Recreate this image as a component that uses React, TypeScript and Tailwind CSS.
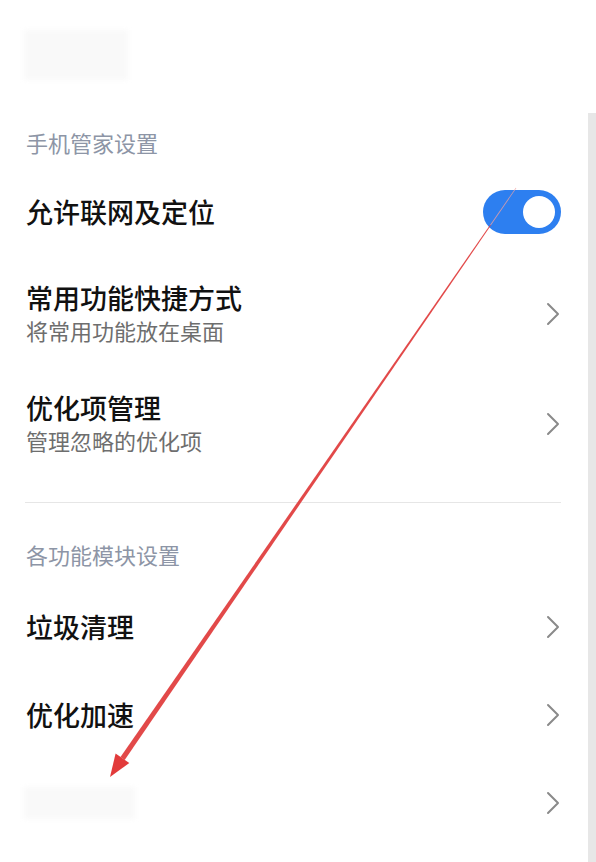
const FONT = { fontFamily: '"Noto Sans CJK SC", "Noto Sans", sans-serif' };

function Chevron() {
  return (
    <svg width="14" height="24" viewBox="0 0 14 24" className="shrink-0">
      <path d="M2 2 L12 12 L2 22" fill="none" stroke="#8a8a8a" strokeWidth="2" strokeLinecap="round" strokeLinejoin="round" />
    </svg>
  );
}

function SectionHeader({ text, h }: { text: string; h: string }) {
  return (
    <div className={`flex items-center ${h} text-[22px] leading-none text-[#8d95a6]`}>{text}</div>
  );
}

function NavRow({ title, sub, h }: { title: React.ReactNode; sub?: string; h: string }) {
  return (
    <div className={`flex items-center justify-between ${h}`}>
      <div className="flex flex-col">
        <div className="text-[27px] font-medium leading-[32px] text-[#111]">{title}</div>
        {sub && <div className="text-[22px] leading-[32px] text-[#6e6e6e]">{sub}</div>}
      </div>
      <div className="mr-[1px]">
        <Chevron />
      </div>
    </div>
  );
}

function Arrow() {
  // tapered red annotation arrow drawn over the list
  return (
    <svg className="pointer-events-none absolute left-0 top-0" width="596" height="862" viewBox="0 0 596 862">
      <polygon points="516.3,188.2 515.7,187.8 490,225 490.8,225.6" fill="#f0a0a0" opacity="0.8" />
      <polygon points="490.8,225.6 490,225 120.5,757.0 124.7,759.9" fill="#e03a3a" opacity="0.92" />
      <polygon points="110,777 115.6,753.5 129.3,763.0" fill="#e23b3b" />
    </svg>
  );
}

export default function App() {
  return (
    <div className="relative h-[862px] w-full overflow-hidden bg-white" style={FONT}>
      <div className="absolute bottom-0 right-0 top-[113px] w-[8px] bg-[#e7e7e7]" />
      <div className="pl-[26px] pr-[35px]">
        <div className="h-[112px] pt-[30px]">
          <div className="ml-[-2px] h-[50px] w-[104px] bg-[#f9f9f9] blur-[2px]" />
        </div>
        <SectionHeader text="手机管家设置" h="h-[60px]" />
        <div className="flex h-[80px] items-center justify-between">
          <div className="text-[27px] font-medium leading-[32px] text-[#111]">允许联网及定位</div>
          <div className="flex h-[44px] w-[78px] items-center justify-end rounded-full bg-[#2d7ff0] pr-[6px]">
            <div className="h-[32px] w-[32px] rounded-full bg-white" />
          </div>
        </div>
        <NavRow title="常用功能快捷方式" sub="将常用功能放在桌面" h="h-[124px]" />
        <NavRow title="优化项管理" sub="管理忽略的优化项" h="h-[96px]" />
        <div className="ml-[-1px] mt-[30px] h-px bg-[#e6e6e6]" />
        <div className="h-[22px]" />
        <SectionHeader text="各功能模块设置" h="h-[58px]" />
        <NavRow title="垃圾清理" h="h-[88px]" />
        <NavRow title="优化加速" h="h-[88px]" />
        <NavRow title={<div className="ml-[-2px] h-[32px] w-[111px] bg-[#f9f9f9] blur-[2px]" />} h="h-[88px]" />
      </div>
      <Arrow />
    </div>
  );
}
